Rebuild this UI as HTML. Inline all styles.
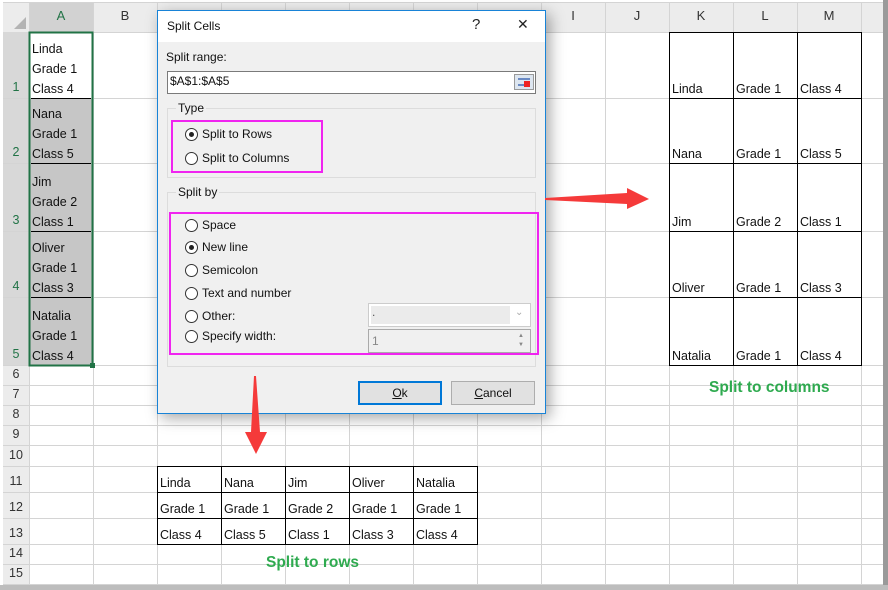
<!DOCTYPE html>
<html><head><meta charset="utf-8"><style>
*{margin:0;padding:0;box-sizing:border-box}
body{width:888px;height:590px;overflow:hidden;background:#fff;font-family:"Segoe UI","Liberation Sans",sans-serif;position:relative}
.a{position:absolute;white-space:nowrap}
.t{font-size:12.5px;color:#111;line-height:20px}
.d{font-size:12px;color:#111}
.rad{position:absolute;width:13px;height:13px;border:1px solid #333;border-radius:50%;background:#fff}
.rad.on::after{content:"";position:absolute;left:3px;top:3px;width:5px;height:5px;border-radius:50%;background:#222}
.g{color:#2eaa4f;font-weight:bold;font-size:15.5px}
</style></head><body>
<svg class="a" style="left:0;top:0" width="888" height="590">
<rect x="0" y="0" width="888" height="590" fill="#fff"/>
<rect x="3" y="3" width="880" height="29" fill="#ececec"/>
<rect x="3" y="3" width="26" height="582" fill="#ececec"/>
<rect x="29" y="3" width="64" height="29" fill="#d2d2d2"/>
<rect x="3" y="32" width="26" height="333" fill="#d8d8d8"/>
<polygon points="14,29 26,29 26,17" fill="#b4b4b4"/>
<rect x="29" y="98" width="64" height="267" fill="#c6c6c6"/>
<g stroke="#d4d4d4" stroke-width="1">
<line x1="3" y1="2.5" x2="883" y2="2.5"/>
<line x1="29" y1="32.5" x2="883" y2="32.5"/>
<line x1="29.5" y1="3" x2="29.5" y2="585"/>
<line x1="93.5" y1="3" x2="93.5" y2="585"/><line x1="157.5" y1="3" x2="157.5" y2="585"/><line x1="221.5" y1="3" x2="221.5" y2="585"/><line x1="285.5" y1="3" x2="285.5" y2="585"/><line x1="349.5" y1="3" x2="349.5" y2="585"/><line x1="413.5" y1="3" x2="413.5" y2="585"/><line x1="477.5" y1="3" x2="477.5" y2="585"/><line x1="541.5" y1="3" x2="541.5" y2="585"/><line x1="605.5" y1="3" x2="605.5" y2="585"/><line x1="669.5" y1="3" x2="669.5" y2="585"/><line x1="733.5" y1="3" x2="733.5" y2="585"/><line x1="797.5" y1="3" x2="797.5" y2="585"/><line x1="861.5" y1="3" x2="861.5" y2="585"/>
<line x1="3" y1="98.5" x2="883" y2="98.5"/><line x1="3" y1="163.5" x2="883" y2="163.5"/><line x1="3" y1="231.5" x2="883" y2="231.5"/><line x1="3" y1="297.5" x2="883" y2="297.5"/><line x1="3" y1="365.5" x2="883" y2="365.5"/><line x1="3" y1="385.5" x2="883" y2="385.5"/><line x1="3" y1="405.5" x2="883" y2="405.5"/><line x1="3" y1="425.5" x2="883" y2="425.5"/><line x1="3" y1="445.5" x2="883" y2="445.5"/><line x1="3" y1="466.5" x2="883" y2="466.5"/><line x1="3" y1="492.5" x2="883" y2="492.5"/><line x1="3" y1="518.5" x2="883" y2="518.5"/><line x1="3" y1="544.5" x2="883" y2="544.5"/><line x1="3" y1="564.5" x2="883" y2="564.5"/><line x1="3" y1="584.5" x2="883" y2="584.5"/>
</g>
<rect x="883" y="0" width="5" height="590" fill="#9a9a9a"/>
<rect x="0" y="585" width="888" height="5" fill="#bdbdbd"/>
<g stroke="#000" stroke-width="1">
<line x1="31" y1="98.5" x2="91" y2="98.5"/><line x1="31" y1="163.5" x2="91" y2="163.5"/><line x1="31" y1="231.5" x2="91" y2="231.5"/><line x1="31" y1="297.5" x2="91" y2="297.5"/>
<rect x="669.5" y="32.5" width="192" height="333" fill="none"/>
<line x1="733.5" y1="32" x2="733.5" y2="366"/><line x1="797.5" y1="32" x2="797.5" y2="366"/>
<line x1="669" y1="98.5" x2="862" y2="98.5"/><line x1="669" y1="163.5" x2="862" y2="163.5"/><line x1="669" y1="231.5" x2="862" y2="231.5"/><line x1="669" y1="297.5" x2="862" y2="297.5"/>
<rect x="157.5" y="466.5" width="320" height="78" fill="none"/>
<line x1="157" y1="492.5" x2="478" y2="492.5"/><line x1="157" y1="518.5" x2="478" y2="518.5"/>
<line x1="221.5" y1="466" x2="221.5" y2="545"/><line x1="285.5" y1="466" x2="285.5" y2="545"/><line x1="349.5" y1="466" x2="349.5" y2="545"/><line x1="413.5" y1="466" x2="413.5" y2="545"/>
</g>
<rect x="29.5" y="32.5" width="63" height="333" fill="none" stroke="#217346" stroke-width="2"/>
<rect x="90" y="363" width="5" height="5" fill="#217346"/>
</svg>
<div class="a" style="left:29px;top:8px;width:64px;text-align:center;font-size:13px;color:#217346">A</div>
<div class="a" style="left:93px;top:8px;width:64px;text-align:center;font-size:13px;color:#333">B</div>
<div class="a" style="left:541px;top:8px;width:64px;text-align:center;font-size:13px;color:#333">I</div>
<div class="a" style="left:605px;top:8px;width:64px;text-align:center;font-size:13px;color:#333">J</div>
<div class="a" style="left:669px;top:8px;width:64px;text-align:center;font-size:13px;color:#333">K</div>
<div class="a" style="left:733px;top:8px;width:64px;text-align:center;font-size:13px;color:#333">L</div>
<div class="a" style="left:797px;top:8px;width:64px;text-align:center;font-size:13px;color:#333">M</div>
<div class="a" style="left:3px;top:80px;width:26px;text-align:center;font-size:12.5px;color:#217346">1</div>
<div class="a" style="left:3px;top:145px;width:26px;text-align:center;font-size:12.5px;color:#217346">2</div>
<div class="a" style="left:3px;top:213px;width:26px;text-align:center;font-size:12.5px;color:#217346">3</div>
<div class="a" style="left:3px;top:279px;width:26px;text-align:center;font-size:12.5px;color:#217346">4</div>
<div class="a" style="left:3px;top:347px;width:26px;text-align:center;font-size:12.5px;color:#217346">5</div>
<div class="a" style="left:3px;top:367px;width:26px;text-align:center;font-size:12.5px;color:#333">6</div>
<div class="a" style="left:3px;top:387px;width:26px;text-align:center;font-size:12.5px;color:#333">7</div>
<div class="a" style="left:3px;top:407px;width:26px;text-align:center;font-size:12.5px;color:#333">8</div>
<div class="a" style="left:3px;top:427px;width:26px;text-align:center;font-size:12.5px;color:#333">9</div>
<div class="a" style="left:3px;top:448px;width:26px;text-align:center;font-size:12.5px;color:#333">10</div>
<div class="a" style="left:3px;top:474px;width:26px;text-align:center;font-size:12.5px;color:#333">11</div>
<div class="a" style="left:3px;top:500px;width:26px;text-align:center;font-size:12.5px;color:#333">12</div>
<div class="a" style="left:3px;top:526px;width:26px;text-align:center;font-size:12.5px;color:#333">13</div>
<div class="a" style="left:3px;top:546px;width:26px;text-align:center;font-size:12.5px;color:#333">14</div>
<div class="a" style="left:3px;top:566px;width:26px;text-align:center;font-size:12.5px;color:#333">15</div>
<div class="a t" style="left:32px;top:39px">Linda<br>Grade 1<br>Class 4</div>
<div class="a t" style="left:32px;top:104px">Nana<br>Grade 1<br>Class 5</div>
<div class="a t" style="left:32px;top:172px">Jim<br>Grade 2<br>Class 1</div>
<div class="a t" style="left:32px;top:238px">Oliver<br>Grade 1<br>Class 3</div>
<div class="a t" style="left:32px;top:306px">Natalia<br>Grade 1<br>Class 4</div>
<div class="a t" style="left:672px;top:79px">Linda</div><div class="a t" style="left:736px;top:79px">Grade 1</div><div class="a t" style="left:800px;top:79px">Class 4</div>
<div class="a t" style="left:672px;top:144px">Nana</div><div class="a t" style="left:736px;top:144px">Grade 1</div><div class="a t" style="left:800px;top:144px">Class 5</div>
<div class="a t" style="left:672px;top:212px">Jim</div><div class="a t" style="left:736px;top:212px">Grade 2</div><div class="a t" style="left:800px;top:212px">Class 1</div>
<div class="a t" style="left:672px;top:278px">Oliver</div><div class="a t" style="left:736px;top:278px">Grade 1</div><div class="a t" style="left:800px;top:278px">Class 3</div>
<div class="a t" style="left:672px;top:346px">Natalia</div><div class="a t" style="left:736px;top:346px">Grade 1</div><div class="a t" style="left:800px;top:346px">Class 4</div>
<div class="a t" style="left:160px;top:473px">Linda</div><div class="a t" style="left:224px;top:473px">Nana</div><div class="a t" style="left:288px;top:473px">Jim</div><div class="a t" style="left:352px;top:473px">Oliver</div><div class="a t" style="left:416px;top:473px">Natalia</div>
<div class="a t" style="left:160px;top:499px">Grade 1</div><div class="a t" style="left:224px;top:499px">Grade 1</div><div class="a t" style="left:288px;top:499px">Grade 2</div><div class="a t" style="left:352px;top:499px">Grade 1</div><div class="a t" style="left:416px;top:499px">Grade 1</div>
<div class="a t" style="left:160px;top:525px">Class 4</div><div class="a t" style="left:224px;top:525px">Class 5</div><div class="a t" style="left:288px;top:525px">Class 1</div><div class="a t" style="left:352px;top:525px">Class 3</div><div class="a t" style="left:416px;top:525px">Class 4</div>
<div class="a g" style="left:709px;top:379px">Split to columns</div>
<div class="a g" style="left:266px;top:554px">Split to rows</div>

<!-- dialog -->
<div class="a" style="left:157px;top:10px;width:389px;height:404px;background:#f0f0f0;border:1px solid #1883d7;box-shadow:4px 4px 14px rgba(0,0,0,.35)">
 <div class="a" style="left:0;top:0;width:387px;height:31px;background:#fff"></div>
 <div class="a d" style="left:9px;top:8px">Split Cells</div>
 <div class="a" style="left:314px;top:5px;font-size:15px;color:#222">?</div>
 <div class="a" style="left:359px;top:5px;font-size:14px;color:#222">✕</div>
 <div class="a d" style="left:8px;top:39px">Split range:</div>
 <div class="a" style="left:9px;top:60px;width:369px;height:23px;background:#fff;border:1px solid #7a7a7a"></div>
 <div class="a d" style="left:12px;top:63px">$A$1:$A$5</div>
 <div class="a" style="left:356px;top:63px;width:20px;height:16px;border:1px solid #999;background:#dde6f0"><div style="position:absolute;left:3px;top:3px;width:12px;height:8px;border-top:2px solid #6a8ac4;border-bottom:2px solid #6a8ac4"></div><div style="position:absolute;left:9px;top:6px;width:6px;height:6px;background:#e22"></div></div>
 <div class="a" style="left:9px;top:97px;width:369px;height:70px;border:1px solid #dcdcdc"></div>
 <div class="a d" style="left:18px;top:90px;background:#f0f0f0;padding:0 2px">Type</div>
 <div class="a" style="left:13px;top:109px;width:152px;height:53px;border:2px solid #f024f0"></div>
 <div class="rad on" style="left:27px;top:117px"></div><div class="a d" style="left:44px;top:116px">Split to Rows</div>
 <div class="rad" style="left:27px;top:141px"></div><div class="a d" style="left:44px;top:140px">Split to Columns</div>
 <div class="a" style="left:9px;top:181px;width:369px;height:175px;border:1px solid #dcdcdc"></div>
 <div class="a d" style="left:18px;top:174px;background:#f0f0f0;padding:0 2px">Split by</div>
 <div class="a" style="left:11px;top:201px;width:370px;height:143px;border:2px solid #f024f0"></div>
 <div class="rad" style="left:27px;top:208px"></div><div class="a d" style="left:44px;top:207px">Space</div>
 <div class="rad on" style="left:27px;top:230px"></div><div class="a d" style="left:44px;top:229px">New line</div>
 <div class="rad" style="left:27px;top:253px"></div><div class="a d" style="left:44px;top:252px">Semicolon</div>
 <div class="rad" style="left:27px;top:276px"></div><div class="a d" style="left:44px;top:275px">Text and number</div>
 <div class="rad" style="left:27px;top:299px"></div><div class="a d" style="left:44px;top:298px">Other:</div>
 <div class="rad" style="left:27px;top:319px"></div><div class="a d" style="left:44px;top:318px">Specify width:</div>
 <div class="a" style="left:210px;top:292px;width:163px;height:24px;border:1px solid #ccc;background:#fff"><div style="position:absolute;left:2px;top:2px;width:139px;height:18px;background:#ebebeb"></div><div style="position:absolute;left:3px;top:1px;font-size:12px;color:#555">.</div><div style="position:absolute;left:146px;top:3px;font-size:10px;color:#aaa">&#8964;</div></div>
 <div class="a" style="left:210px;top:318px;width:163px;height:24px;border:1px solid #aaa;background:#f0f0f0"><div style="position:absolute;left:3px;top:4px;font-size:12px;color:#888">1</div><div style="position:absolute;left:145px;top:2px;width:14px;height:18px;font-size:6px;color:#888;line-height:9px;text-align:center">▲<br>▼</div></div>
 <div class="a" style="left:200px;top:370px;width:84px;height:24px;border:2px solid #0078d7;background:#e1e1e1;text-align:center;font-size:12px;line-height:20px;color:#111"><u>O</u>k</div>
 <div class="a" style="left:293px;top:370px;width:84px;height:24px;border:1px solid #adadad;background:#e1e1e1;text-align:center;font-size:12px;line-height:22px;color:#111"><u>C</u>ancel</div>
</div>
<svg class="a" style="left:0;top:0" width="888" height="590">
<polygon points="545,198 627,193 627,188 649,199 627,209 627,204 545,200" fill="#f53a3a"/>
<polygon points="254,376 256,376 260,432 267,432 256,454 245,432 251,432" fill="#f53a3a"/>
</svg>
</body></html>
